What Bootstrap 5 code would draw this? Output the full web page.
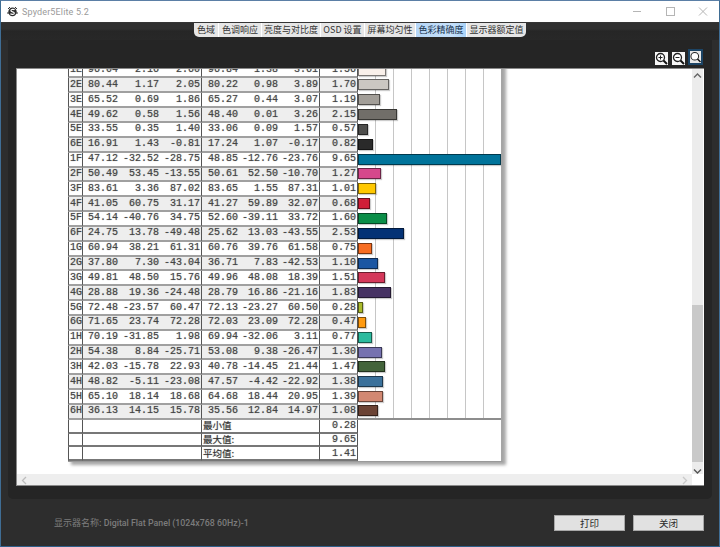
<!DOCTYPE html>
<html lang="zh">
<head>
<meta charset="utf-8">
<title>Spyder5Elite 5.2</title>
<link href="https://cdn.jsdelivr.net/npm/bootstrap@5.3.0/dist/css/bootstrap.min.css" rel="stylesheet">
<style>
html,body{margin:0;height:547px;overflow:hidden;background:#2d2d2d}
.app-win{height:547px;border-top:1px solid #5b7fa6;border-left:1px solid #3f6d94;border-right:1px solid #3f6d94;border-bottom:1px solid #2f5f8a;background:#2d2d2d}
.title-bar{height:21px;background:#fff;font:9px Roboto,sans-serif;color:#9a9a9a;padding-left:6px}
.title-bar span.ttl{margin-left:4px;letter-spacing:.15px}
.win-ctl{width:33px;height:21px}
.tab-strip{height:18px;background:linear-gradient(#3a3a3a 0,#303030 1px,#303030 7px,#262626 9px,#282828 100%)}
.tab-set{height:14px;margin-top:1px;border-radius:0 0 5px 5px;overflow:hidden;background:#e6e6e6}
.tab-item{font:9px/14px "Noto Sans CJK SC","Noto Sans",sans-serif;color:#333;padding:0;border-left:1px solid #fff;white-space:nowrap;text-align:center}
.tab-item:first-child{border-left:0}
.tab-on{background:linear-gradient(90deg,#b5d6f7,#c8e2fb 70%,#a9d2f7);color:#17324d}
.main-panel{height:459px;margin:0 7px;background:#252525;border-radius:0 0 5px 5px;padding:0 8px}
.zoom-bar{height:28px;padding:9px 1px 0 0}
.zoom-btn{width:13px;height:13px;background:#f6f6f6;display:block;margin-top:3px}
.zoom-sel{width:15px;height:16px;background:#e8e8e8;border:2px solid #1c4465;margin-top:0;margin-left:-1px}
.view-port{height:418px;background:#fff;border:1px solid #8a8a8a;border-right:0;overflow:hidden}
.sheet-area{width:674px;height:405px;overflow:hidden}
.lab-table{border-collapse:separate;border-spacing:0;table-layout:fixed;width:435px;margin:-5.4px 0 0 51px;background:#fff;box-shadow:3px 3px 3px rgba(0,0,0,.35);border-right:2px solid #a5a5a5;border-bottom:1px solid #999;font:10px "Liberation Mono",monospace;color:#444;text-shadow:0 0 1px rgba(0,0,0,.45)}
.lab-table td{padding:0 1px 0 0;text-align:right;border-bottom:2px solid #a0a0a0;height:14.85px;line-height:12px;overflow:hidden;white-space:nowrap}
.lab-table tr.alt td{background:#eee}
.lab-table td.cid{border-left:1px solid #555;border-right:1px solid #555;text-align:left;padding-left:1px}
.lab-table td.gend{border-right:1px solid #555}
.lab-table td.grf,.lab-table tr.alt td.grf{padding:0;border-bottom:0;background:#fff repeating-linear-gradient(90deg,transparent 0,transparent 17px,#c6c6c6 17px,#c6c6c6 18px);text-align:left;vertical-align:middle}
.lab-table tr.lastrow td.grf{border-bottom:2px solid #8d8d8d}
.lab-table tr.sum td{height:13.8px;border-bottom-color:#777;line-height:11px}
.lab-table tr.sum td.lbl{font:9.5px/11px "Noto Sans CJK SC",sans-serif;text-align:left;color:#333;padding-left:1px}
.lab-table td.grf-end,.lab-table tr.sum td.grf-end{border:0;background:#fff}
.lab-bar{display:block;height:11px;margin-top:-2px;border:1.5px solid rgba(0,0,0,.5);box-shadow:1px 1px 1px rgba(0,0,0,.2);max-width:143px}
.sb-v{width:11px;background:#ececec;height:405px;margin-left:1px}
.sb-arrow{height:14px;font-size:0;color:#555}
.sb-thumb{height:157px;background:#c9c9c9;margin-top:222px;margin-bottom:3px}
.sb-h{height:12px;background:#eee}
.sb-corner{width:12px;height:12px;background:#fff}
.foot-bar{height:47px;padding:0 15px 0 53px;font:8.8px Roboto,"Noto Sans CJK SC",sans-serif;color:#7c7c7c}
.foot-bar b{font-weight:500}
.foot-name{font:9px "Noto Sans CJK SC",sans-serif}
.act-btn{width:71px;height:16px;padding:0;border:1px solid #a8a8a8;border-radius:0;background:#e1e1e1;color:#2a2a2a;font:9.5px/14px "Noto Sans CJK SC",sans-serif}
</style>
</head>
<body>
<div class="app-win d-flex flex-column">
  <div class="title-bar d-flex align-items-center">
    <svg width="11" height="11" viewBox="0 0 11 11"><path d="M1 3 3 1M10 3 8 1M0 7h2M11 7H9" stroke="#333" stroke-width="1"/><ellipse cx="5.5" cy="5.8" rx="4.2" ry="4.4" fill="#2b2b2b"/><path d="M7.6 3.8C6.4 2.9 3.8 3.2 3.9 4.8 4 6.2 7.4 5.6 7.3 7.2 7.2 8.6 4.6 8.6 3.4 7.8" fill="none" stroke="#fff" stroke-width="1.2"/></svg>
    <span class="ttl">Spyder5Elite 5.2</span>
    <div class="ms-auto d-flex align-items-center">
      <svg class="win-ctl" viewBox="0 0 33 21"><path d="M13 10.500h8" stroke="#b5b5b5"/></svg>
      <svg class="win-ctl" viewBox="0 0 33 21"><rect x="13.500" y="6.500" width="8" height="8" fill="none" stroke="#b5b5b5"/></svg>
      <svg class="win-ctl" viewBox="0 0 33 21"><path d="M13 6.500l8 8M21 6.500l-8 8" stroke="#b5b5b5"/></svg>
    </div>
  </div>
  <div class="tab-strip d-flex justify-content-center">
    <div class="tab-set d-flex">
      <div class="tab-item" style="width:24px">色域</div>
      <div class="tab-item" style="width:43px">色调响应</div>
      <div class="tab-item" style="width:59px">亮度与对比度</div>
      <div class="tab-item" style="width:44px">OSD 设置</div>
      <div class="tab-item" style="width:51px">屏幕均匀性</div>
      <div class="tab-item tab-on" style="width:51px">色彩精确度</div>
      <div class="tab-item" style="width:60px">显示器额定值</div>
    </div>
  </div>
  <div class="main-panel">
    <div class="zoom-bar d-flex justify-content-end gap-1">
      <svg class="zoom-btn" viewBox="0 0 13 13"><circle cx="5.500" cy="5.500" r="4" fill="#fff" stroke="#222" stroke-width="1.300"/><path d="M8.500 8.500 12 12" stroke="#111" stroke-width="2"/><path d="M3.500 5.500h4M5.500 3.500v4" stroke="#222"/></svg>
      <svg class="zoom-btn" viewBox="0 0 13 13"><circle cx="5.500" cy="5.500" r="4" fill="#fff" stroke="#222" stroke-width="1.300"/><path d="M8.500 8.500 12 12" stroke="#111" stroke-width="2"/><path d="M3.500 5.500h4" stroke="#222"/></svg>
      <svg class="zoom-btn zoom-sel" viewBox="0 0 12 12"><circle cx="5.200" cy="5.200" r="4.200" fill="#fff" stroke="#222" stroke-width="1.100"/><path d="M8.200 8.200l3.300 3.300" stroke="#111" stroke-width="1.600"/></svg>
    </div>
    <div class="view-port">
      <div class="d-flex">
        <div class="sheet-area">
          <table class="lab-table">
            <colgroup><col style="width:15px"><col style="width:36px"><col style="width:41px"><col style="width:42px"><col style="width:37px"><col style="width:40px"><col style="width:41px"><col style="width:38px"><col></colgroup>
            <tbody>
            <tr><td class="cid">1E</td><td>96.04</td><td>2.16</td><td class="gend">2.60</td><td>96.84</td><td>1.38</td><td class="gend">3.61</td><td class="gend">1.56</td><td class="grf"><span class="lab-bar" style="width:28px;background:#f9f0ea"></span></td></tr>
            <tr class="alt"><td class="cid">2E</td><td>80.44</td><td>1.17</td><td class="gend">2.05</td><td>80.22</td><td>0.98</td><td class="gend">3.89</td><td class="gend">1.70</td><td class="grf"><span class="lab-bar" style="width:31px;background:#cbc7c2"></span></td></tr>
            <tr><td class="cid">3E</td><td>65.52</td><td>0.69</td><td class="gend">1.86</td><td>65.27</td><td>0.44</td><td class="gend">3.07</td><td class="gend">1.19</td><td class="grf"><span class="lab-bar" style="width:22px;background:#a29e98"></span></td></tr>
            <tr class="alt"><td class="cid">4E</td><td>49.62</td><td>0.58</td><td class="gend">1.56</td><td>48.40</td><td>0.01</td><td class="gend">3.26</td><td class="gend">2.15</td><td class="grf"><span class="lab-bar" style="width:39px;background:#716e69"></span></td></tr>
            <tr><td class="cid">5E</td><td>33.55</td><td>0.35</td><td class="gend">1.40</td><td>33.06</td><td>0.09</td><td class="gend">1.57</td><td class="gend">0.57</td><td class="grf"><span class="lab-bar" style="width:10px;background:#4d4d4b"></span></td></tr>
            <tr class="alt"><td class="cid">6E</td><td>16.91</td><td>1.43</td><td class="gend">-0.81</td><td>17.24</td><td>1.07</td><td class="gend">-0.17</td><td class="gend">0.82</td><td class="grf"><span class="lab-bar" style="width:15px;background:#2a2a2a"></span></td></tr>
            <tr><td class="cid">1F</td><td>47.12</td><td>-32.52</td><td class="gend">-28.75</td><td>48.85</td><td>-12.76</td><td class="gend">-23.76</td><td class="gend">9.65</td><td class="grf"><span class="lab-bar" style="width:143px;background:#00739a"></span></td></tr>
            <tr class="alt"><td class="cid">2F</td><td>50.49</td><td>53.45</td><td class="gend">-13.55</td><td>50.61</td><td>52.50</td><td class="gend">-10.70</td><td class="gend">1.27</td><td class="grf"><span class="lab-bar" style="width:23px;background:#d6488c"></span></td></tr>
            <tr><td class="cid">3F</td><td>83.61</td><td>3.36</td><td class="gend">87.02</td><td>83.65</td><td>1.55</td><td class="gend">87.31</td><td class="gend">1.01</td><td class="grf"><span class="lab-bar" style="width:18px;background:#ffc800"></span></td></tr>
            <tr class="alt"><td class="cid">4F</td><td>41.05</td><td>60.75</td><td class="gend">31.17</td><td>41.27</td><td>59.89</td><td class="gend">32.07</td><td class="gend">0.68</td><td class="grf"><span class="lab-bar" style="width:12px;background:#d01f38"></span></td></tr>
            <tr><td class="cid">5F</td><td>54.14</td><td>-40.76</td><td class="gend">34.75</td><td>52.60</td><td>-39.11</td><td class="gend">33.72</td><td class="gend">1.60</td><td class="grf"><span class="lab-bar" style="width:29px;background:#0b8e48"></span></td></tr>
            <tr class="alt"><td class="cid">6F</td><td>24.75</td><td>13.78</td><td class="gend">-49.48</td><td>25.62</td><td>13.03</td><td class="gend">-43.55</td><td class="gend">2.53</td><td class="grf"><span class="lab-bar" style="width:46px;background:#043275"></span></td></tr>
            <tr><td class="cid">1G</td><td>60.94</td><td>38.21</td><td class="gend">61.31</td><td>60.76</td><td>39.76</td><td class="gend">61.58</td><td class="gend">0.75</td><td class="grf"><span class="lab-bar" style="width:14px;background:#f76d22"></span></td></tr>
            <tr class="alt"><td class="cid">2G</td><td>37.80</td><td>7.30</td><td class="gend">-43.04</td><td>36.71</td><td>7.83</td><td class="gend">-42.53</td><td class="gend">1.10</td><td class="grf"><span class="lab-bar" style="width:20px;background:#1b56a2"></span></td></tr>
            <tr><td class="cid">3G</td><td>49.81</td><td>48.50</td><td class="gend">15.76</td><td>49.96</td><td>48.08</td><td class="gend">18.39</td><td class="gend">1.51</td><td class="grf"><span class="lab-bar" style="width:27px;background:#d4385a"></span></td></tr>
            <tr class="alt"><td class="cid">4G</td><td>28.88</td><td>19.36</td><td class="gend">-24.48</td><td>28.79</td><td>16.86</td><td class="gend">-21.16</td><td class="gend">1.83</td><td class="grf"><span class="lab-bar" style="width:33px;background:#463263"></span></td></tr>
            <tr><td class="cid">5G</td><td>72.48</td><td>-23.57</td><td class="gend">60.47</td><td>72.13</td><td>-23.27</td><td class="gend">60.50</td><td class="gend">0.28</td><td class="grf"><span class="lab-bar" style="width:5px;background:#abbb2c"></span></td></tr>
            <tr class="alt"><td class="cid">6G</td><td>71.65</td><td>23.74</td><td class="gend">72.28</td><td>72.03</td><td>23.09</td><td class="gend">72.28</td><td class="gend">0.47</td><td class="grf"><span class="lab-bar" style="width:8px;background:#ff9a10"></span></td></tr>
            <tr><td class="cid">1H</td><td>70.19</td><td>-31.85</td><td class="gend">1.98</td><td>69.94</td><td>-32.06</td><td class="gend">3.11</td><td class="gend">0.77</td><td class="grf"><span class="lab-bar" style="width:14px;background:#2cbb9f"></span></td></tr>
            <tr class="alt"><td class="cid">2H</td><td>54.38</td><td>8.84</td><td class="gend">-25.71</td><td>53.08</td><td>9.38</td><td class="gend">-26.47</td><td class="gend">1.30</td><td class="grf"><span class="lab-bar" style="width:24px;background:#7672b0"></span></td></tr>
            <tr><td class="cid">3H</td><td>42.03</td><td>-15.78</td><td class="gend">22.93</td><td>40.78</td><td>-14.45</td><td class="gend">21.44</td><td class="gend">1.47</td><td class="grf"><span class="lab-bar" style="width:27px;background:#43643b"></span></td></tr>
            <tr class="alt"><td class="cid">4H</td><td>48.82</td><td>-5.11</td><td class="gend">-23.08</td><td>47.57</td><td>-4.42</td><td class="gend">-22.92</td><td class="gend">1.38</td><td class="grf"><span class="lab-bar" style="width:25px;background:#3b719b"></span></td></tr>
            <tr><td class="cid">5H</td><td>65.10</td><td>18.14</td><td class="gend">18.68</td><td>64.68</td><td>18.44</td><td class="gend">20.95</td><td class="gend">1.39</td><td class="grf"><span class="lab-bar" style="width:25px;background:#d28872"></span></td></tr>
            <tr class="alt lastrow"><td class="cid">6H</td><td>36.13</td><td>14.15</td><td class="gend">15.78</td><td>35.56</td><td>12.84</td><td class="gend">14.97</td><td class="gend">1.08</td><td class="grf"><span class="lab-bar" style="width:20px;background:#6b4335"></span></td></tr>
            <tr class="sum"><td class="cid"></td><td colspan="3" class="gend"></td><td colspan="3" class="lbl gend">最小值</td><td class="gend">0.28</td><td class="grf-end" rowspan="3"></td></tr>
            <tr class="sum"><td class="cid"></td><td colspan="3" class="gend"></td><td colspan="3" class="lbl gend">最大值:</td><td class="gend">9.65</td></tr>
            <tr class="sum"><td class="cid"></td><td colspan="3" class="gend"></td><td colspan="3" class="lbl gend">平均值:</td><td class="gend">1.41</td></tr>
            </tbody>
          </table>
        </div>
        <div class="sb-v d-flex flex-column align-items-center">
          <svg class="sb-arrow flex-shrink-0" width="9" height="14" viewBox="0 0 9 14"><path d="M1 8.500 4.500 5 8 8.500" fill="none" stroke="#666" stroke-width="1.400"/></svg>
          <div class="sb-thumb w-100 flex-shrink-0"></div>
          <svg class="sb-arrow flex-shrink-0" width="9" height="8" viewBox="0 0 9 8"><path d="M1 1.500 4.500 5 8 1.500" fill="none" stroke="#555" stroke-width="1.400"/></svg>
        </div>
      </div>
      <div class="d-flex">
        <div class="sb-h flex-grow-1 d-flex align-items-center justify-content-between px-1">
          <svg width="7" height="9" viewBox="0 0 7 9"><path d="M5 1 1.500 4.500 5 8" fill="none" stroke="#bdbdbd" stroke-width="1.300"/></svg>
          <svg width="7" height="9" viewBox="0 0 7 9"><path d="M2 1 5.500 4.500 2 8" fill="none" stroke="#c9c9c9" stroke-width="1.300"/></svg>
        </div>
        <div class="sb-corner"></div>
      </div>
    </div>
  </div>
  <div class="foot-bar d-flex align-items-center">
    <span><span class="foot-name">显示器名称:</span> <b>Digital Flat Panel (1024x768 60Hz)-1</b></span>
    <div class="ms-auto d-flex gap-2">
      <button type="button" class="btn act-btn">打印</button>
      <button type="button" class="btn act-btn">关闭</button>
    </div>
  </div>
</div>
</body>
</html>
